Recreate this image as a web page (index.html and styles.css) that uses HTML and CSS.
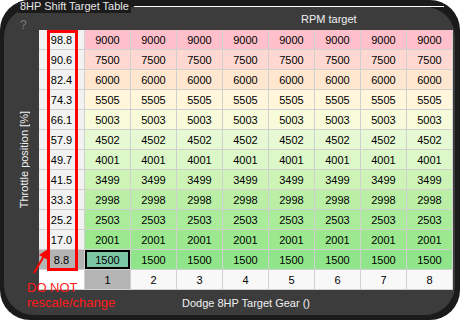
FILE: index.html
```html
<!DOCTYPE html>
<html>
<head>
<meta charset="utf-8">
<link rel="stylesheet" href="styles.css">
</head>
<body>
<div class="frame">
  <div class="legend">8HP Shift Target Table</div>
  <div class="legend-line"></div>
  <div class="panel">
    <div class="help">?</div>
    <div class="top-label">RPM target</div>
    <div class="side-label">Throttle position [%]</div>
    <div class="table">
      <div class="row r1"><div class="h">98.8</div><div>9000</div><div>9000</div><div>9000</div><div>9000</div><div>9000</div><div>9000</div><div>9000</div><div>9000</div></div>
      <div class="row r2"><div class="h">90.6</div><div>7500</div><div>7500</div><div>7500</div><div>7500</div><div>7500</div><div>7500</div><div>7500</div><div>7500</div></div>
      <div class="row r3"><div class="h">82.4</div><div>6000</div><div>6000</div><div>6000</div><div>6000</div><div>6000</div><div>6000</div><div>6000</div><div>6000</div></div>
      <div class="row r4"><div class="h">74.3</div><div>5505</div><div>5505</div><div>5505</div><div>5505</div><div>5505</div><div>5505</div><div>5505</div><div>5505</div></div>
      <div class="row r5"><div class="h">66.1</div><div>5003</div><div>5003</div><div>5003</div><div>5003</div><div>5003</div><div>5003</div><div>5003</div><div>5003</div></div>
      <div class="row r6"><div class="h">57.9</div><div>4502</div><div>4502</div><div>4502</div><div>4502</div><div>4502</div><div>4502</div><div>4502</div><div>4502</div></div>
      <div class="row r7"><div class="h">49.7</div><div>4001</div><div>4001</div><div>4001</div><div>4001</div><div>4001</div><div>4001</div><div>4001</div><div>4001</div></div>
      <div class="row r8"><div class="h">41.5</div><div>3499</div><div>3499</div><div>3499</div><div>3499</div><div>3499</div><div>3499</div><div>3499</div><div>3499</div></div>
      <div class="row r9"><div class="h">33.3</div><div>2998</div><div>2998</div><div>2998</div><div>2998</div><div>2998</div><div>2998</div><div>2998</div><div>2998</div></div>
      <div class="row r10"><div class="h">25.2</div><div>2503</div><div>2503</div><div>2503</div><div>2503</div><div>2503</div><div>2503</div><div>2503</div><div>2503</div></div>
      <div class="row r11"><div class="h">17.0</div><div>2001</div><div>2001</div><div>2001</div><div>2001</div><div>2001</div><div>2001</div><div>2001</div><div>2001</div></div>
      <div class="row r12"><div class="h sel">8.8</div><div class="cur">1500</div><div>1500</div><div>1500</div><div>1500</div><div>1500</div><div>1500</div><div>1500</div><div>1500</div></div>
      <div class="row axis"><div class="corner"></div><div class="sel">1</div><div>2</div><div>3</div><div>4</div><div>5</div><div>6</div><div>7</div><div>8</div></div>
      <div class="redbox"></div>
    </div>
    <div class="bottom-label">Dodge 8HP Target Gear ()</div>
  </div>
  <svg class="arrow" width="30" height="40" viewBox="0 0 30 40">
    <line x1="5" y1="35" x2="15" y2="18" stroke="#ff0000" stroke-width="2"/>
    <polygon points="19,11 19,22 10,17" fill="#ff0000"/>
  </svg>
  <div class="note">
    <div class="note-line">DO NOT</div>
    <div class="note-line">rescale/change</div>
  </div>
</div>
</body>
</html>
```
FILE: styles.css
```css
html, body {
  margin: 0;
  padding: 0;
  background: #ffffff;
}

.frame {
  position: relative;
  width: 460px;
  height: 320px;
  background: #1b1b1b;
  border-radius: 30px;
  overflow: hidden;
  font-family: "Liberation Sans", Arial, sans-serif;
  font-size: 11px;
}

.legend {
  position: absolute;
  top: 0;
  left: 18px;
  height: 13px;
  padding: 0 2px;
  line-height: 13px;
  background: #1b1b1b;
  color: #e8e8e8;
  z-index: 2;
}

.legend-line {
  position: absolute;
  top: 6px;
  left: 134px;
  right: 16px;
  height: 1px;
  background: #ffffff;
  z-index: 1;
}

.panel {
  margin: 7px 5px 0 4px;
  height: 308px;
  background: #3c3c3c;
  border-radius: 30px;
  display: grid;
  grid-template-columns: 35px 414px;
  grid-template-rows: 23px 260px auto;
}

.help {
  color: #7a7a7a;
  font-size: 12px;
  line-height: 14px;
  padding: 11px 0 0 16px;
}

.top-label {
  color: #f0f0f0;
  line-height: 13px;
  padding: 6px 0 0 262px;
}

.side-label {
  color: #f0f0f0;
  writing-mode: vertical-rl;
  transform: rotate(180deg);
  align-self: center;
  justify-self: center;
  padding-right: 1px;
  margin-left: 4px;
  line-height: 13px;
}

.table {
  position: relative;
  display: flex;
  flex-direction: column;
}

.row {
  display: flex;
  height: 20px;
}

.row > div {
  width: 46px;
  height: 20px;
  box-sizing: border-box;
  border-right: 1px solid #d0d0d0;
  border-bottom: 1px solid #d0d0d0;
  display: flex;
  align-items: center;
  justify-content: center;
  color: #000;
}

.row .h { background: #f2f2f2; }
.r1 { background: #ffc0cb; }
.r2 { background: #ffd8d1; }
.r3 { background: #ffe6cf; }
.r4 { background: #fff6dc; }
.r5 { background: #f7fbd9; }
.r6 { background: #e6f9d2; }
.r7 { background: #dcf7c8; }
.r8 { background: #cdf3b7; }
.r9 { background: #bbefa6; }
.r10 { background: #abec9b; }
.r11 { background: #9be88f; }
.r12 { background: #90e58a; }
.axis { background: #f8f8f8; }

.row .sel { background: #b4b4b4; }
.row .corner { background: #ffffff; }
.row .cur {
  background: #7cc6a6;
  box-shadow: inset 0 0 0 2px #000;
}

.redbox {
  position: absolute;
  left: 8px;
  top: 0;
  width: 31px;
  height: 241px;
  box-sizing: border-box;
  border: 3px solid #ff0000;
}

.bottom-label {
  grid-column: 2;
  text-align: center;
  color: #f0f0f0;
  line-height: 13px;
  padding-top: 7px;
}

.arrow {
  position: absolute;
  left: 29px;
  top: 238px;
}

.note {
  position: absolute;
  left: 27px;
  top: 280px;
  color: #ff1a1a;
  font-size: 13px;
}

.note-line {
  line-height: 15px;
  height: 15px;
}
```
